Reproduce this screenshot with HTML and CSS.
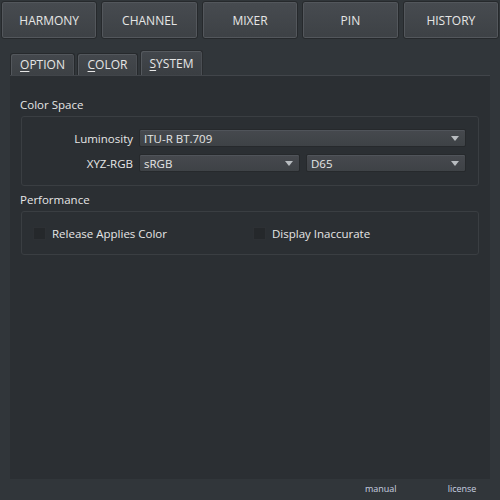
FILE: index.html
```html
<!DOCTYPE html>
<html>
<head>
<meta charset="utf-8">
<link rel="stylesheet" href="styles.css">
</head>
<body>
<div class="app">
  <div class="topbar">
    <div class="btn">HARMONY</div>
    <div class="btn">CHANNEL</div>
    <div class="btn">MIXER</div>
    <div class="btn">PIN</div>
    <div class="btn">HISTORY</div>
  </div>
  <div class="tabs">
    <div class="tab tab-opt"><u>O</u>PTION</div>
    <div class="tab tab-col"><u>C</u>OLOR</div>
    <div class="tab tab-sys active"><u>S</u>YSTEM</div>
  </div>
  <div class="panel">
    <div class="section-title">Color Space</div>
    <div class="group gs">
      <div class="row">
        <div class="lbl">Luminosity</div>
        <div class="combo wide"><span>ITU-R BT.709</span><i class="arrow"></i></div>
      </div>
      <div class="row">
        <div class="lbl">XYZ-RGB</div>
        <div class="combo half"><span>sRGB</span><i class="arrow"></i></div>
        <div class="combo half2"><span>D65</span><i class="arrow"></i></div>
      </div>
    </div>
    <div class="section-title perf">Performance</div>
    <div class="group gp">
      <div class="check c1"><i class="box"></i><span>Release Applies Color</span></div>
      <div class="check c2"><i class="box"></i><span>Display Inaccurate</span></div>
    </div>
  </div>
  <div class="footer">
    <span class="link l1">manual</span>
    <span class="link l2">license</span>
  </div>
</div>
</body>
</html>
```
FILE: styles.css
```css
html, body {
  margin: 0;
  padding: 0;
  background: #31363a;
}
.app {
  width: 500px;
  height: 500px;
  font-family: "Open Sans", "DejaVu Sans", sans-serif;
  font-size: 11.5px;
  color: #e6e6e6;
  display: flex;
  flex-direction: column;
}
.topbar {
  display: flex;
  gap: 4px;
  padding: 1px 1px 0 1px;
}
.btn {
  width: 95px;
  height: 36px;
  border: 1px solid #26292c;
  border-radius: 3px;
  box-shadow: inset 0 0 0 1px #53575c;
  background: linear-gradient(#474b50, #3d4145);
  display: flex;
  align-items: center;
  justify-content: center;
  font-size: 12px;
}
.tabs {
  display: flex;
  align-items: flex-end;
  margin: 11px 0 0 10px;
  height: 25px;
  gap: 2px;
}
.tab {
  height: 21px;
  border: 1px solid #26292c;
  border-bottom: none;
  border-radius: 3px 3px 0 0;
  box-shadow: inset 1px 1px 0 #53575c, inset -1px 0 0 #4b4f54;
  background: linear-gradient(#44484d, #3d4145);
  display: flex;
  align-items: center;
  justify-content: center;
  box-sizing: content-box;
  font-size: 12px;
}
.tab u { text-decoration: underline; text-underline-offset: 2px; }
.tab-opt { width: 63px; }
.tab-col { width: 59px; }
.tab-sys { width: 61px; }
.tab.active {
  height: 24px;
  background: linear-gradient(#43474c, #3a3e42);
  box-shadow: inset 1px 1px 0 #55595e, inset -1px 0 0 #4b4f54;
  border-color: #2a2d30;
}
.panel {
  margin-left: 10px;
  width: 480px;
  height: 404px;
  background: #2b2f33;
  border-top: 1px solid #41454a;
  box-sizing: border-box;
  display: flex;
  flex-direction: column;
  padding: 0 0 0 10px;
}
.section-title {
  height: 14px;
  line-height: 14px;
  margin-top: 22px;
  color: #e6e6e6;
}
.section-title.perf { margin-top: 7px; }
.group {
  margin: 4px 0 0 1px;
  width: 458px;
  border: 1px solid #3a3e42;
  border-radius: 3px;
  box-sizing: border-box;
}
.gs {
  height: 70px;
  padding-top: 12px;
  display: flex;
  flex-direction: column;
  gap: 7px;
}
.row {
  display: flex;
  align-items: center;
  height: 18px;
}
.lbl {
  width: 111px;
  text-align: right;
  padding-right: 6px;
}
.combo {
  height: 18px;
  box-sizing: border-box;
  border: 1px solid #26292c;
  border-radius: 2px;
  box-shadow: inset 0 1px 0 #50545a;
  background: linear-gradient(#46494e, #3e4246);
  display: flex;
  align-items: center;
  justify-content: space-between;
  padding: 0 6px 0 4px;
}
.combo.wide { width: 327px; }
.combo.half { width: 161px; }
.combo.half2 { width: 160px; margin-left: 6px; }
.arrow {
  width: 0;
  height: 0;
  border-left: 4.5px solid transparent;
  border-right: 4.5px solid transparent;
  border-top: 5px solid #b8bcc0;
}
.gp {
  height: 44px;
  display: flex;
  align-items: center;
  padding-left: 11px;
}
.check {
  display: flex;
  align-items: center;
}
.c1 { width: 220px; }
.box {
  width: 13px;
  height: 13px;
  box-sizing: border-box;
  background: #25282b;
  border: 1px solid #2d3034;
  margin-right: 6px;
}
.footer {
  height: 19px;
  display: flex;
  align-items: center;
  font-size: 9px;
  color: #c8d0e0;
}
.l1 { margin-left: 365px; }
.l2 { margin-left: 51px; }
```
